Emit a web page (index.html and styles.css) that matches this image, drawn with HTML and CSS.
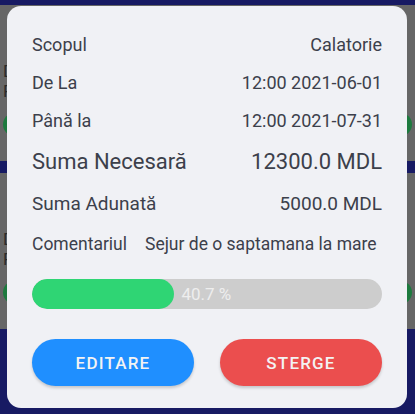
FILE: index.html
```html
<!DOCTYPE html>
<html>
<head>
<meta charset="utf-8">
<link rel="stylesheet" href="styles.css">
</head>
<body>
<div class="screen">
  <div class="bg">
    <div class="bg-top"></div>
    <div class="bg-card">
      <div class="bg-line l1">D</div>
      <div class="bg-line l2">P</div>
      <div class="bg-pill"></div>
    </div>
    <div class="bg-gap"></div>
    <div class="bg-card">
      <div class="bg-line l1">D</div>
      <div class="bg-line l2">P</div>
      <div class="bg-pill"></div>
    </div>
  </div>
  <div class="modal">
    <div class="row"><span>Scopul</span><span>Calatorie</span></div>
    <div class="row"><span>De La</span><span>12:00 2021-06-01</span></div>
    <div class="row"><span>Până la</span><span>12:00 2021-07-31</span></div>
    <div class="row big"><span>Suma Necesară</span><span>12300.0 MDL</span></div>
    <div class="row mid"><span>Suma Adunată</span><span>5000.0 MDL</span></div>
    <div class="row comment"><span>Comentariul</span><span class="cval">Sejur de o saptamana la mare</span></div>
    <div class="progress">
      <div class="fill" style="width: 40.7%"></div>
      <span class="pct">40.7 %</span>
    </div>
    <div class="actions">
      <button class="btn edit">EDITARE</button>
      <button class="btn del">STERGE</button>
    </div>
  </div>
</div>
</body>
</html>
```

FILE: styles.css
```css
html, body {
  margin: 0;
  padding: 0;
}
body {
  width: 415px;
  height: 414px;
  overflow: hidden;
  background: #171a63;
  font-family: Roboto, "Noto Sans", sans-serif;
}
.screen {
  position: relative;
  width: 415px;
  height: 414px;
}
.bg {
  display: flex;
  flex-direction: column;
}
.bg-top {
  height: 5px;
  background: #171a63;
}
.bg-card {
  height: 156px;
  background: #666666;
  position: relative;
  color: #2a2a2a;
  font-size: 17px;
}
.bg-line {
  position: absolute;
  left: 3px;
  line-height: 1;
}
.bg-line.l1 { top: 58px; }
.bg-line.l2 { top: 78px; }
.bg-pill {
  position: absolute;
  left: 3px;
  right: 3px;
  top: 108px;
  height: 23px;
  border-radius: 12px;
  background: #1d7a3e;
}
.bg-gap {
  height: 12px;
  background: #171a63;
}
.modal {
  position: absolute;
  left: 7px;
  top: 6px;
  width: 400px;
  height: 402px;
  box-sizing: border-box;
  background: #f0f1f5;
  border-radius: 14px;
  padding: 19px 25px 0 25px;
  color: #3c404b;
}
.row {
  display: flex;
  justify-content: space-between;
  align-items: center;
  font-size: 18px;
  height: 38px;
  white-space: nowrap;
}
.row.big {
  font-size: 22px;
  height: 44px;
}
.row.mid {
  font-size: 19px;
  height: 41px;
}
.row.comment {
  font-size: 17.5px;
  height: 39px;
  justify-content: flex-start;
}
.cval {
  margin-left: 18px;
}
.progress {
  position: relative;
  margin-top: 16px;
  height: 30px;
  border-radius: 15px;
  background: #cdcdcd;
  overflow: hidden;
  display: flex;
  align-items: center;
}
.fill {
  height: 100%;
  background: #2fd574;
  border-radius: 15px;
}
.pct {
  margin-left: 7px;
  color: #eeeeee;
  font-size: 17px;
}
.actions {
  display: flex;
  justify-content: space-between;
  margin-top: 30px;
}
.btn {
  width: 162px;
  height: 47px;
  border: none;
  border-radius: 24px;
  color: #f3f3f3;
  font-family: Roboto, sans-serif;
  font-weight: 500;
  font-size: 17px;
  letter-spacing: 1.2px;
  box-shadow: 0 2px 3px rgba(0,0,0,0.18);
}
.btn.edit { background: #1f8fff; }
.btn.del { background: #eb4e4e; }
```
